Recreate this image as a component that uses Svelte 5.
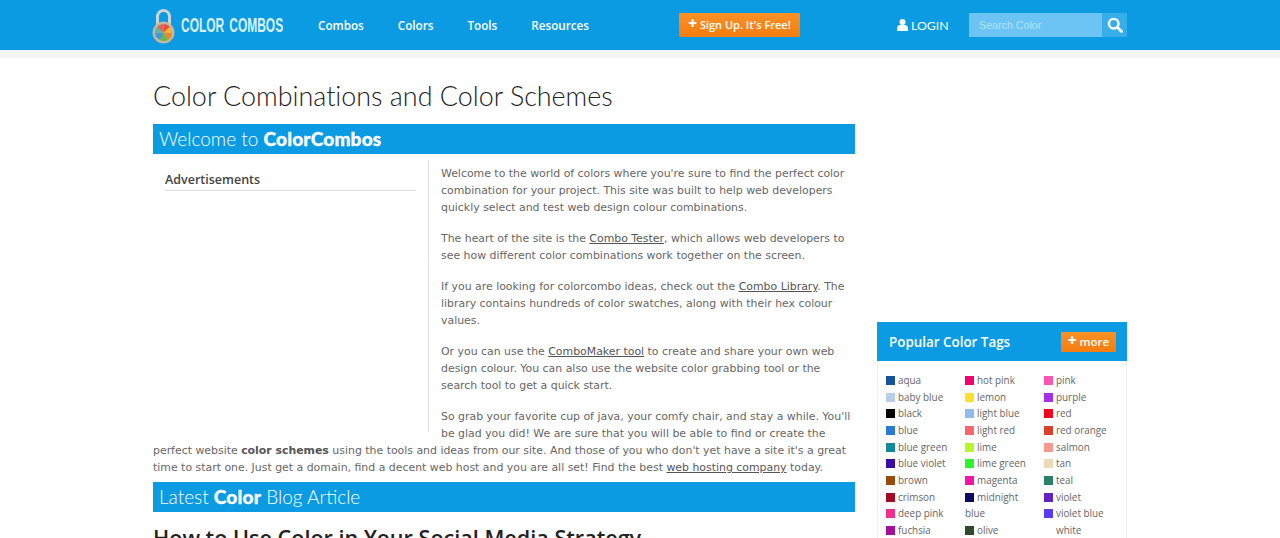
<script>
  const nav = ['Combos', 'Colors', 'Tools', 'Resources']
  const tagCols = [
    [['aqua', '#14539a'], ['baby blue', '#b9cfe8'], ['black', '#000'], ['blue', '#2a7bd0'], ['blue green', '#14879f'], ['blue violet', '#3a0ca3'], ['brown', '#964b0c'], ['crimson', '#a30a24'], ['deep pink', '#f0308a'], ['fuchsia', '#a0109a']],
    [['hot pink', '#f5026f'], ['lemon', '#fde02f'], ['light blue', '#8ebcee'], ['light red', '#f8656f'], ['lime', '#b4f52c'], ['lime green', '#2cf52c'], ['magenta', '#f514a8'], ['midnight blue', '#0a0a64'], ['olive', '#2f4a28']],
    [['pink', '#fb55b4'], ['purple', '#a52df0'], ['red', '#f2061c'], ['red orange', '#d8402c'], ['salmon', '#f59a90'], ['tan', '#efd9b5'], ['teal', '#2a8068'], ['violet', '#6420c0'], ['violet blue', '#5a3cf5'], ['white', '#fff']]
  ]
</script>

<div class="page">
  <header>
    <div class="wrap bar">
      <a class="logo" href="#top">
        <svg width="23" height="36" viewBox="0 0 23 36">
          <path d="M5.500 17V8.500a6 6 0 0 1 12 0V17" fill="none" stroke="#cfd4d8" stroke-width="3"/>
          <circle cx="11.500" cy="24.500" r="11" fill="#c4b6a2"/>
          <path d="M11.500 24.500V16A8.500 8.500 0 0 1 18 19Z" fill="#e8503c"/>
          <path d="M11.500 24.500L18 19A8.500 8.500 0 0 1 20 25Z" fill="#f2b632"/>
          <path d="M11.500 24.500L20 25A8.500 8.500 0 0 1 16 32Z" fill="#e98a2e"/>
          <path d="M11.500 24.500L16 32A8.500 8.500 0 0 1 8 32Z" fill="#6cb64a"/>
          <path d="M11.500 24.500L8 32A8.500 8.500 0 0 1 3 25Z" fill="#3f9ad6"/>
          <path d="M11.500 24.500L3 25A8.500 8.500 0 0 1 5 19Z" fill="#62b5a0"/>
          <path d="M11.500 24.500L5 19A8.500 8.500 0 0 1 11.500 16Z" fill="#d9685a"/>
        </svg>
        <span class="logotext">COLOR COMBOS</span>
      </a>
      <nav>
        {#each nav as item}
          <a href="#top">{item}</a>
        {/each}
      </nav>
      <a class="signup" href="#top"><span class="plus">+</span> Sign Up. It's Free!</a>
      <a class="login" href="#top">
        <svg width="11" height="12" viewBox="0 0 11 12"><circle cx="5.500" cy="3" r="3" fill="#fff"/><path d="M0 12V9.500C0 7.500 1.500 6 3 6h5c1.500 0 3 1.500 3 3.500V12Z" fill="#fff"/></svg>
        LOGIN
      </a>
      <div class="search">
        <span class="field">Search Color</span>
        <button aria-label="Search">
          <svg width="16" height="16" viewBox="0 0 16 16"><circle cx="6.700" cy="6.700" r="4.800" fill="none" stroke="#fff" stroke-width="2.400"/><path d="M10.300 10.300L14.500 14.500" stroke="#fff" stroke-width="2.800" stroke-linecap="round"/></svg>
        </button>
      </div>
    </div>
  </header>
  <div class="strip"></div>

  <div class="wrap content">
    <main>
      <h1>Color Combinations and Color Schemes</h1>
      <h2>Welcome to <b>ColorCombos</b></h2>
      <div class="intro">
        <aside><h3>Advertisements</h3></aside>
        <p>Welcome to the world of colors where you're sure to find the perfect color combination for your project. This site was built to help web developers quickly select and test web design colour combinations.</p>
        <p>The heart of the site is the <a href="#top">Combo Tester</a>, which allows web developers to see how different color combinations work together on the screen.</p>
        <p>If you are looking for colorcombo ideas, check out the <a href="#top">Combo Library</a>. The library contains hundreds of color swatches, along with their hex colour values.</p>
        <p>Or you can use the <a href="#top">ComboMaker tool</a> to create and share your own web design colour. You can also use the website color grabbing tool or the search tool to get a quick start.</p>
        <p>So grab your favorite cup of java, your comfy chair, and stay a while. You'll be glad you did! We are sure that you will be able to find or create the perfect website <strong>color schemes</strong> using the tools and ideas from our site. And those of you who don't yet have a site it's a great time to start one. Just get a domain, find a decent web host and you are all set! Find the best <a href="#top">web hosting company</a> today.</p>
      </div>
      <h2 class="second">Latest <b>Color</b> Blog Article</h2>
      <h3 class="article">How to Use Color in Your Social Media Strategy</h3>
    </main>

    <section class="tags">
      <div class="tags-head">
        <span>Popular Color Tags</span>
        <a class="more" href="#top"><span class="plus">+</span> more</a>
      </div>
      <div class="tags-body">
        {#each tagCols as col}
          <ul>
            {#each col as [name, color]}
              <li><i style="background:{color}"></i>{name}</li>
            {/each}
          </ul>
        {/each}
      </div>
    </section>
  </div>
</div>

<style>
  :global(body) { margin: 0; background: #fff; }
  .page { height: 538px; overflow: hidden; font-family: "DejaVu Sans", sans-serif; }
  .wrap { width: 974px; margin: 0 auto; }
  a { color: inherit; text-decoration: none; }

  header { height: 50px; background: #0a9be2; color: #fff; }
  .bar { display: flex; align-items: center; height: 50px; font-family: "Open Sans", sans-serif; }
  .strip { height: 8px; background: #f5f5f5; }
  .logo { display: flex; align-items: center; flex: none; width: 166px; margin-left: -1px; }
  .logo svg { flex: none; margin-top: 1px; }
  .logotext {
    font-family: "Liberation Sans", sans-serif; font-weight: 700;
    font-size: 21px; color: #d8f1ff; margin-left: 6px; white-space: nowrap; word-spacing: 3px;
    display: inline-block; transform: scaleX(.57); transform-origin: left center;
  }
  nav { display: flex; gap: 34px; font-size: 11.700px; font-weight: 600; width: 361px; flex: none; }
  .signup {
    width: 121px; height: 24px; line-height: 24px; text-align: center; box-sizing: border-box; flex: none;
    font-size: 11px; font-weight: 600; white-space: nowrap;
    background: linear-gradient(#fb9226, #f57c10); border-radius: 1px;
  }
  .plus { font-weight: 800; font-size: 15px; line-height: 1; }
  .login {
    margin-left: 97px; width: 72px; display: flex; align-items: center; gap: 3px;
    font-family: "Lato", sans-serif; font-size: 12.300px;
  }
  .search { display: flex; width: 158px; height: 24px; }
  .field {
    width: 133px; padding-left: 10px; box-sizing: border-box; line-height: 24px;
    background: #6cc4f5; color: #b5e3fb; font-family: "Liberation Sans", sans-serif; font-size: 10.700px;
  }
  .search button {
    width: 25px; padding: 0; border: 0; background: #37aeea;
    display: flex; align-items: center; justify-content: center;
  }

  .content { display: flex; align-items: flex-start; }
  main { width: 702px; flex: none; }
  h1 {
    margin: 20px 0 0; font-family: "Lato", sans-serif; font-weight: 300; font-variant-ligatures: none;
    font-size: 26.900px; line-height: 36px; color: #222;
  }
  h2 {
    margin: 10px 0 0; height: 30px; line-height: 29px; padding-left: 6px;
    background: #0a9be2; color: #fff; font-family: "Lato", sans-serif;
    font-weight: 300; font-size: 19px;
  }
  h2 b { font-weight: 900; -webkit-text-stroke: .3px #fff; letter-spacing: .2px; }
  h2.second { margin-top: 6px; }
  .intro { font-size: 10.920px; line-height: 17px; color: #666; }
  .intro a { color: #555; text-decoration: underline; }
  .intro strong { color: #555; }
  .intro p { margin: 0 0 14px; }
  .intro p:last-child { margin-bottom: 0; }
  .intro p:first-of-type { padding-top: 11px; }
  aside {
    float: left; width: 276px; height: 272px; margin: 6px 12px 0 0; box-sizing: border-box;
    padding: 11px 12px 0; border-right: 1px solid #ddd;
  }
  aside h3 {
    margin: 0; padding-bottom: 1px; border-bottom: 1px solid #ddd;
    font-family: "Open Sans", sans-serif; font-weight: 600; font-size: 12.500px; line-height: 18px; color: #444;
  }
  .article {
    margin: 12px 0 0; font-family: "Open Sans", sans-serif; font-weight: 600;
    font-size: 21.600px; line-height: 28px; color: #222;
  }

  .tags { width: 250px; margin: 264px 0 0 22px; flex: none; font-family: "Open Sans", sans-serif; }
  .tags-head {
    height: 39px; padding: 0 11px 0 12px; display: flex; align-items: center; justify-content: space-between;
    background: #0a9be2; color: #fff; font-size: 13.400px; font-weight: 600;
  }
  .more {
    width: 55px; height: 20px; line-height: 20px; text-align: center;
    background: linear-gradient(#fb9226, #f57c10); font-size: 11.500px; font-weight: 600; border-radius: 1px;
  }
  .tags-body {
    display: grid; grid-template-columns: repeat(3, 79px);
    padding: 11px 0 0 8px; border: 1px solid #eee; border-top: 0; margin: 0;
  }
  ul { list-style: none; margin: 0; padding: 0; width: 70px; }
  li { font-size: 9.900px; line-height: 16.650px; color: #666; }
  li i { display: inline-block; width: 9px; height: 9px; margin-right: 3px; vertical-align: -1px; }
</style>
